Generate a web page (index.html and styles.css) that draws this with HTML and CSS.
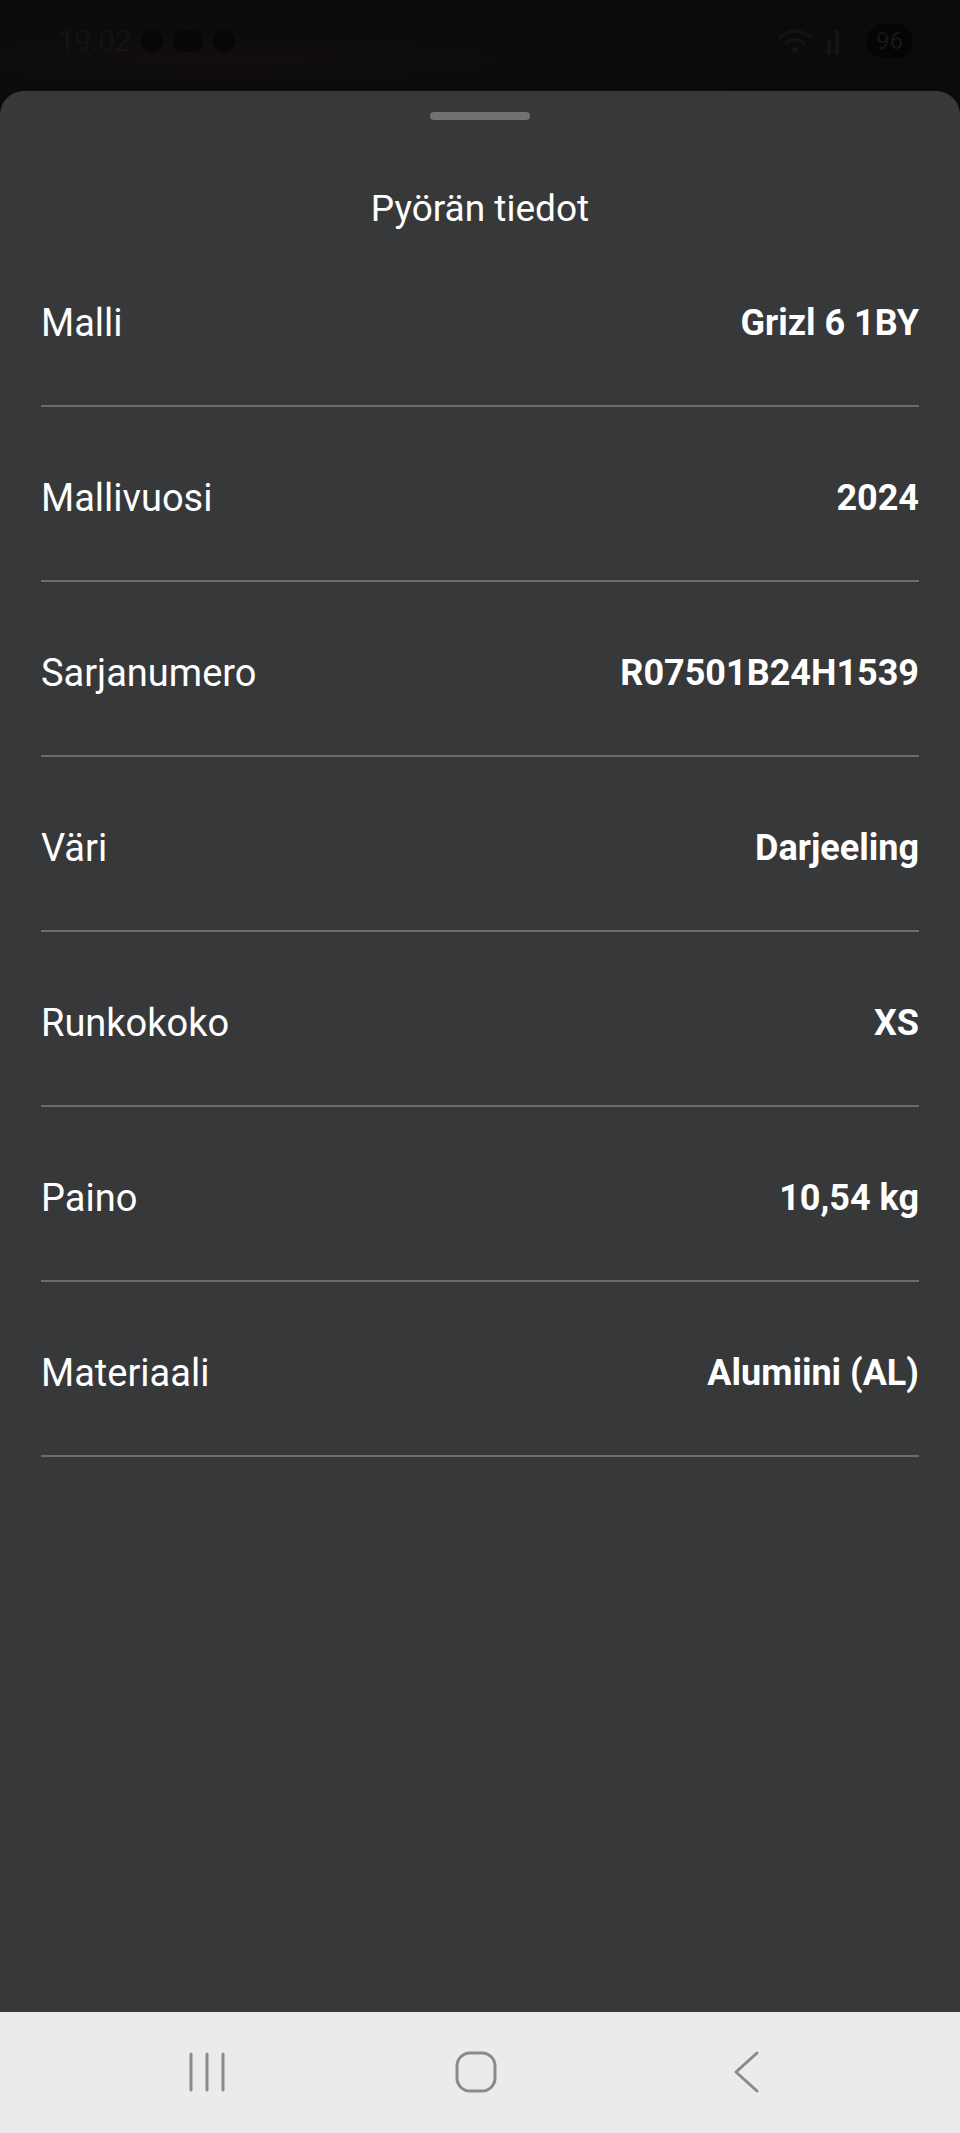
FILE: index.html
```html
<!DOCTYPE html>
<html>
<head>
    <title>Pyörän tiedot</title>
    <link rel="stylesheet" href="styles.css">
</head>
<body>
    <div class="screen">
        <div class="status-bar">
            <div class="status-left">
                <span class="clock">19.02</span>
                <span class="dot"></span>
                <span class="dot wide"></span>
                <span class="dot"></span>
            </div>
            <div class="status-right">
                <svg class="wifi" width="40" height="30" viewBox="0 0 40 30">
                    <path d="M4 12 Q20 -2 36 12" fill="none" stroke="#141414" stroke-width="3"/>
                    <path d="M10 18 Q20 9 30 18" fill="none" stroke="#141414" stroke-width="3"/>
                    <circle cx="20" cy="24" r="3" fill="#141414"/>
                </svg>
                <svg class="signal" width="20" height="30" viewBox="0 0 20 30">
                    <rect x="2" y="14" width="4" height="14" fill="#141414"/>
                    <rect x="10" y="4" width="4" height="24" fill="#141414"/>
                </svg>
                <span class="battery">96</span>
            </div>
        </div>

        <div class="sheet">
            <div class="handle"></div>
            <h1 class="sheet-title">Pyörän tiedot</h1>

            <div class="info-list">
                <div class="info-row">
                    <span class="info-label">Malli</span>
                    <span class="info-value">Grizl 6 1BY</span>
                </div>
                <div class="info-row">
                    <span class="info-label">Mallivuosi</span>
                    <span class="info-value">2024</span>
                </div>
                <div class="info-row">
                    <span class="info-label">Sarjanumero</span>
                    <span class="info-value">R07501B24H1539</span>
                </div>
                <div class="info-row">
                    <span class="info-label">Väri</span>
                    <span class="info-value">Darjeeling</span>
                </div>
                <div class="info-row">
                    <span class="info-label">Runkokoko</span>
                    <span class="info-value">XS</span>
                </div>
                <div class="info-row">
                    <span class="info-label">Paino</span>
                    <span class="info-value">10,54 kg</span>
                </div>
                <div class="info-row">
                    <span class="info-label">Materiaali</span>
                    <span class="info-value">Alumiini (AL)</span>
                </div>
            </div>
        </div>

        <div class="nav-bar">
            <svg width="40" height="42" viewBox="0 0 40 42">
                <line x1="4" y1="3" x2="4" y2="39" stroke="#8a8a8a" stroke-width="3" stroke-linecap="round"/>
                <line x1="20" y1="3" x2="20" y2="39" stroke="#8a8a8a" stroke-width="3" stroke-linecap="round"/>
                <line x1="36" y1="3" x2="36" y2="39" stroke="#8a8a8a" stroke-width="3" stroke-linecap="round"/>
            </svg>
            <svg width="44" height="44" viewBox="0 0 44 44">
                <rect x="3" y="3" width="38" height="38" rx="13" fill="none" stroke="#8a8a8a" stroke-width="3"/>
            </svg>
            <svg width="30" height="44" viewBox="0 0 30 44">
                <path d="M25 3 L4 22 L25 41" fill="none" stroke="#8a8a8a" stroke-width="3" stroke-linecap="round" stroke-linejoin="round"/>
            </svg>
        </div>
    </div>
</body>
</html>
```

FILE: styles.css
```css
body {
    margin: 0;
    background-color: #0b0b0b;
    font-family: Roboto, "Liberation Sans", Arial, sans-serif;
}
.screen {
    display: flex;
    flex-direction: column;
    height: 2133px;
}
.status-bar {
    height: 91px;
    flex-shrink: 0;
    display: flex;
    justify-content: space-between;
    align-items: center;
    padding: 0 48px 10px 58px;
    box-sizing: border-box;
    background: radial-gradient(ellipse at 220px 60px, #120e0d 0%, #0c0c0c 30%, #0a0a0a 100%);
}
.status-left,
.status-right {
    display: flex;
    align-items: center;
    gap: 10px;
}
.clock {
    color: #131313;
    font-size: 30px;
    letter-spacing: -0.5px;
}
.dot {
    width: 22px;
    height: 22px;
    border-radius: 50%;
    background-color: #070707;
}
.dot.wide {
    width: 30px;
    border-radius: 10px;
}
.battery {
    color: #171717;
    background-color: #050505;
    font-size: 24px;
    border-radius: 16px;
    padding: 3px 9px;
    margin-left: 12px;
}
.sheet {
    flex: 1;
    background-color: #37383a;
    border-radius: 24px 24px 0 0;
    display: flex;
    flex-direction: column;
    align-items: center;
}
.handle {
    width: 100px;
    height: 8px;
    border-radius: 4px;
    background-color: #707173;
    margin-top: 21px;
}
.sheet-title {
    margin: 67px 0 0 0;
    font-size: 37px;
    font-weight: 400;
    line-height: 44px;
    color: #ffffff;
}
.info-list {
    align-self: stretch;
    padding: 0 41px;
    margin-top: 1px;
    display: flex;
    flex-direction: column;
}
.info-row {
    display: flex;
    justify-content: space-between;
    align-items: center;
    padding: 69px 0 60px 0;
    border-bottom: 2px solid #6b6c6e;
    line-height: 44px;
    color: #ffffff;
}
.info-label {
    font-size: 38px;
}
.info-value {
    font-size: 36px;
    font-weight: 700;
}
.nav-bar {
    height: 121px;
    flex-shrink: 0;
    background-color: #ebebeb;
    display: flex;
    align-items: center;
    padding-bottom: 2px;
    box-sizing: border-box;
}
.nav-bar svg:nth-child(1) {
    margin-left: 187px;
}
.nav-bar svg:nth-child(2) {
    margin-left: 227px;
}
.nav-bar svg:nth-child(3) {
    margin-left: 234px;
}
```
